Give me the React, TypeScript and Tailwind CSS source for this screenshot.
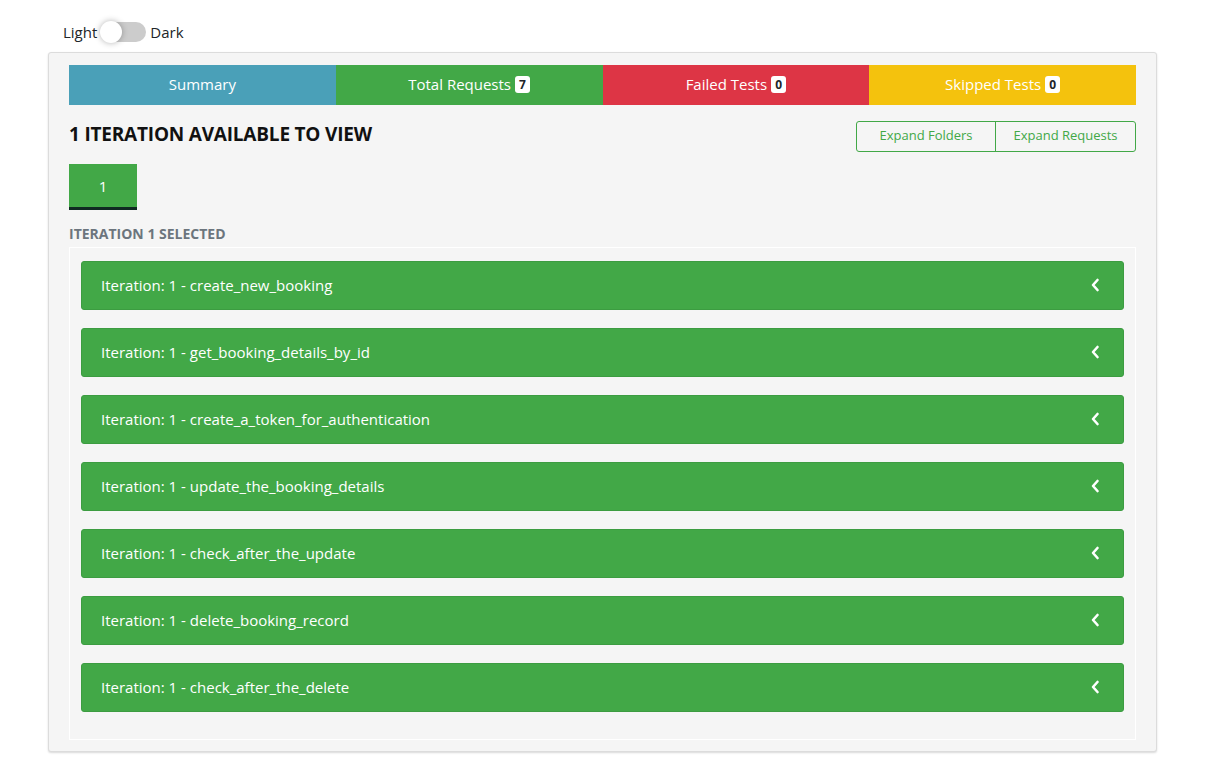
import React from "react";

const requests = [
  "create_new_booking",
  "get_booking_details_by_id",
  "create_a_token_for_authentication",
  "update_the_booking_details",
  "check_after_the_update",
  "delete_booking_record",
  "check_after_the_delete",
];

function Badge({ n }: { n: number }) {
  return (
    <span className="ml-1 inline-flex h-[17px] min-w-[15px] items-center justify-center rounded-[3px] bg-white px-[4px] text-[12px] font-bold leading-none text-[#212529]">
      {n}
    </span>
  );
}

function Chevron() {
  return (
    <svg width="10" height="14" viewBox="0 0 10 14" fill="none" stroke="white" strokeWidth="2.6" strokeLinecap="round" strokeLinejoin="round">
      <path d="M7.5 2L3 7l4.5 5" />
    </svg>
  );
}

export default function App() {
  return (
    <div className="min-h-screen bg-white text-[#212529]" style={{ fontFamily: '"Open Sans", "Noto Sans", sans-serif' }}>
      {/* theme toggle */}
      <div className="flex items-center pl-[63px] pt-[21px] text-[15px]">
        <span>Light</span>
        <div className="relative mx-[4px] h-[20px] w-[45px] rounded-full bg-[#cccccc]">
          <div className="absolute -left-[1px] -top-[1px] h-[22px] w-[22px] rounded-full bg-white shadow-[0_0_6px_rgba(0,0,0,0.3)]" />
        </div>
        <span>Dark</span>
      </div>

      <div className="mx-[48px] mt-[8px] w-[1109px] rounded-[3px] border border-[#dcdcdc] bg-[#f5f5f5] px-[20px] pb-[11px] pt-[12px] shadow-[0_1px_2px_rgba(0,0,0,0.15)]">
        {/* summary tabs */}
        <div className="grid h-[40px] grid-cols-4 text-[15px] text-white">
          <div className="flex items-center justify-center bg-[#4aa0b8]">Summary</div>
          <div className="flex items-center justify-center bg-[#42a847]">
            Total Requests <Badge n={7} />
          </div>
          <div className="flex items-center justify-center bg-[#dd3545]">
            Failed Tests <Badge n={0} />
          </div>
          <div className="flex items-center justify-center bg-[#f4c20d]">
            Skipped Tests <Badge n={0} />
          </div>
        </div>

        <div className="mt-[16px] flex items-start justify-between">
          <h2 className="-mt-[1px] text-[19px] font-bold tracking-[-0.2px] text-[#111]">1 ITERATION AVAILABLE TO VIEW</h2>
          <div className="flex h-[31px] overflow-hidden rounded-[3px] border border-[#42a847] text-[13px] text-[#42a847]">
            <div className="flex w-[139px] items-center justify-center border-r border-[#42a847]">Expand Folders</div>
            <div className="flex w-[139px] items-center justify-center">Expand Requests</div>
          </div>
        </div>

        <div className="mt-[12px] flex">
          <div className="flex h-[46px] w-[68px] items-center justify-center border-b-[3px] border-[#0f2a22] bg-[#42a847] pt-[3px] text-[15px] text-white">1</div>
        </div>

        <div className="mt-[13px] text-[14px] font-bold text-[#6c757d]">ITERATION 1 SELECTED</div>

        <div className="mt-[3px] flex flex-col gap-[18px] border border-white bg-[#f5f5f5] px-[11px] pb-[27px] pt-[13px]">
          {requests.map((r) => (
            <div
              key={r}
              className="flex h-[49px] items-center justify-between rounded-[3px] border border-[#3c9c41] bg-[#42a847] pl-[19px] pr-[23px] text-[15px] text-white"
            >
              <span>Iteration: 1 - {r}</span>
              <Chevron />
            </div>
          ))}
        </div>
      </div>
    </div>
  );
}
